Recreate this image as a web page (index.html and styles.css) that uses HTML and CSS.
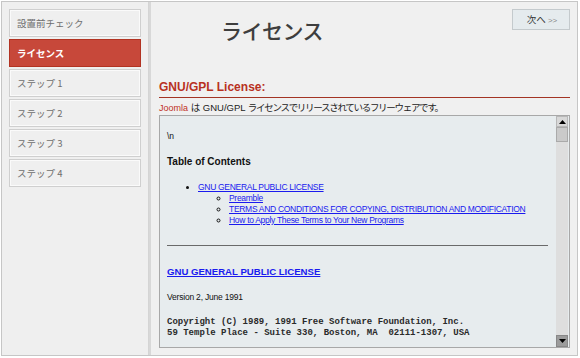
FILE: index.html
```html
<!DOCTYPE html>
<html lang="ja">
<head>
<meta charset="utf-8">
<title>ライセンス</title>
<link rel="stylesheet" href="styles.css">
</head>
<body>
<div class="frame">
  <aside class="steps">
    <div class="step">設置前チェック</div>
    <div class="step active">ライセンス</div>
    <div class="step">ステップ 1</div>
    <div class="step">ステップ 2</div>
    <div class="step">ステップ 3</div>
    <div class="step">ステップ 4</div>
  </aside>
  <main class="main">
    <div class="head">
      <h1 class="title">ライセンス</h1>
      <button class="next">次へ <span class="arrows">&gt;&gt;</span></button>
    </div>
    <h2 class="section">GNU/GPL License:</h2>
    <p class="intro"><span class="brand">Joomla</span> は GNU/GPL <span class="jp">ライセンスでリリースされているフリーウェアです。</span></p>
    <div class="license">
      <div class="license-body">
        <p class="nl">\n</p>
        <h3 class="toc">Table of Contents</h3>
        <ul class="toc-list">
          <li><a href="#">GNU GENERAL PUBLIC LICENSE</a>
            <ul class="toc-sub">
              <li><a href="#">Preamble</a></li>
              <li><a href="#">TERMS AND CONDITIONS FOR COPYING, DISTRIBUTION AND MODIFICATION</a></li>
              <li><a href="#">How to Apply These Terms to Your New Programs</a></li>
            </ul>
          </li>
        </ul>
        <hr class="rule">
        <h3 class="gpl"><a href="#">GNU GENERAL PUBLIC LICENSE</a></h3>
        <p class="version">Version 2, June 1991</p>
        <pre class="copy">Copyright (C) 1989, 1991 Free Software Foundation, Inc.
59 Temple Place - Suite 330, Boston, MA  02111-1307, USA</pre>
      </div>
      <div class="scrollbar">
        <div class="sb-btn sb-up"><svg width="7" height="4" viewBox="0 0 7 4"><path d="M0 4 L3.5 0 L7 4 Z" fill="#000"/></svg></div>
        <div class="sb-thumb"></div>
        <div class="sb-track"></div>
        <div class="sb-btn sb-down"><svg width="7" height="4" viewBox="0 0 7 4"><path d="M0 0 L3.5 4 L7 0 Z" fill="#000"/></svg></div>
      </div>
    </div>
  </main>
</div>
</body>
</html>
```

FILE: styles.css
```css
html, body {
  margin: 0;
  padding: 0;
  background: #ffffff;
}
body {
  font-family: "Liberation Sans", "Noto Sans CJK JP", sans-serif;
  color: #333;
}
.frame {
  margin: 1px 1px 0 1px;
  width: 577px;
  height: 355px;
  border: 1px solid #c6c6c6;
  display: flex;
  box-sizing: border-box;
  background: #efefef;
}
.steps {
  width: 148px;
  box-sizing: border-box;
  border-right: 1px solid #d4d4d4;
  padding: 7px 0 0 7px;
  display: flex;
  flex-direction: column;
  gap: 2px;
  background: #efefef;
}
.step {
  width: 132px;
  height: 28px;
  box-sizing: border-box;
  border: 1px solid #cfcfcf;
  box-shadow: inset 0 0 0 1px #fafafa;
  font-family: "Noto Sans CJK JP", sans-serif;
  font-size: 9.5px;
  line-height: 26px;
  padding-left: 7px;
  color: #6e6e6e;
  background: #efefef;
}
.step.active {
  background: #c7483a;
  border-color: #b23322;
  box-shadow: none;
  color: #fff;
  font-weight: bold;
}
.main {
  flex: 1;
  box-sizing: border-box;
  border-left: 2px solid #d8d8d8;
  padding: 7px 7px 0 8px;
  background: #f0f0f0;
  display: flex;
  flex-direction: column;
}
.head {
  display: flex;
  justify-content: space-between;
  align-items: flex-start;
}
.title {
  margin: 8px 0 0 62px;
  font-family: "Noto Sans CJK JP", sans-serif;
  font-size: 21px;
  line-height: 26px;
  font-weight: 500;
  letter-spacing: -0.5px;
  color: #3e3e3e;
}
.next {
  width: 58px;
  height: 21px;
  margin: 0;
  padding: 0 0 0 2px;
  border: 1px solid #c4cacd;
  background: #e5ebee;
  font-family: "Noto Sans CJK JP", sans-serif;
  font-size: 9.5px;
  color: #333;
  line-height: 19px;
}
.arrows {
  font-family: "Liberation Sans", sans-serif;
  font-size: 8px;
  color: #888;
}
.section {
  margin: 37px 0 0 0;
  padding-bottom: 3px;
  border-bottom: 1px solid #a33424;
  font-size: 12px;
  line-height: 14px;
  font-weight: bold;
  color: #b8311f;
}
.intro {
  margin: 3px 0 0 0;
  font-family: "Liberation Sans", "Noto Sans CJK JP", sans-serif;
  font-size: 9.5px;
  line-height: 13px;
  color: #222;
}
.brand {
  color: #c0301e;
  font-size: 9px;
}
.jp {
  letter-spacing: -1.3px;
}
.license {
  width: 411px;
  height: 233px;
  box-sizing: border-box;
  border: 1px solid #a8a8a8;
  background: #e7ecee;
  display: flex;
  overflow: hidden;
}
.license-body {
  flex: 1;
  padding: 15px 8px 0 7px;
  overflow: hidden;
  color: #111;
}
.nl {
  margin: 0;
  font-size: 8.5px;
  line-height: 11px;
}
.toc {
  margin: 14px 0 0 0;
  font-size: 10px;
  line-height: 12px;
  font-weight: bold;
}
.toc-list {
  margin: 14px 0 0 0;
  padding-left: 31px;
  font-size: 8.5px;
  line-height: 11px;
  list-style: disc;
  letter-spacing: -0.3px;
}
.toc-sub {
  margin: 0;
  padding-left: 31px;
  list-style: circle;
}
a {
  color: #1a1aee;
}
.rule {
  margin: 19px 0 0 0;
  border: 0;
  border-top: 1px solid #6a6a6a;
  height: 0;
}
.gpl {
  margin: 19px 0 0 0;
  font-size: 9.6px;
  line-height: 13px;
  font-weight: bold;
}
.version {
  margin: 14px 0 0 0;
  font-size: 8.5px;
  line-height: 11px;
  letter-spacing: -0.2px;
}
.copy {
  margin: 14px 0 0 0;
  font-family: "Liberation Mono", monospace;
  font-size: 9px;
  line-height: 11px;
  font-weight: bold;
  color: #2a2a2a;
}
.scrollbar {
  width: 12px;
  margin-right: 1px;
  display: flex;
  flex-direction: column;
  background: #dcdcdc;
}
.sb-btn {
  height: 11px;
  box-sizing: border-box;
  display: flex;
  align-items: center;
  justify-content: center;
  border: 1px solid #b8b8b8;
  background: #d8d8d8;
}
.sb-down {
  height: 12px;
  background: #9c9c9c;
  border-color: #888;
}
.sb-thumb {
  height: 15px;
  box-sizing: border-box;
  border: 1px solid #aaa;
  background: #cacaca;
}
.sb-track {
  flex: 1;
  background: #dedede;
}
```
